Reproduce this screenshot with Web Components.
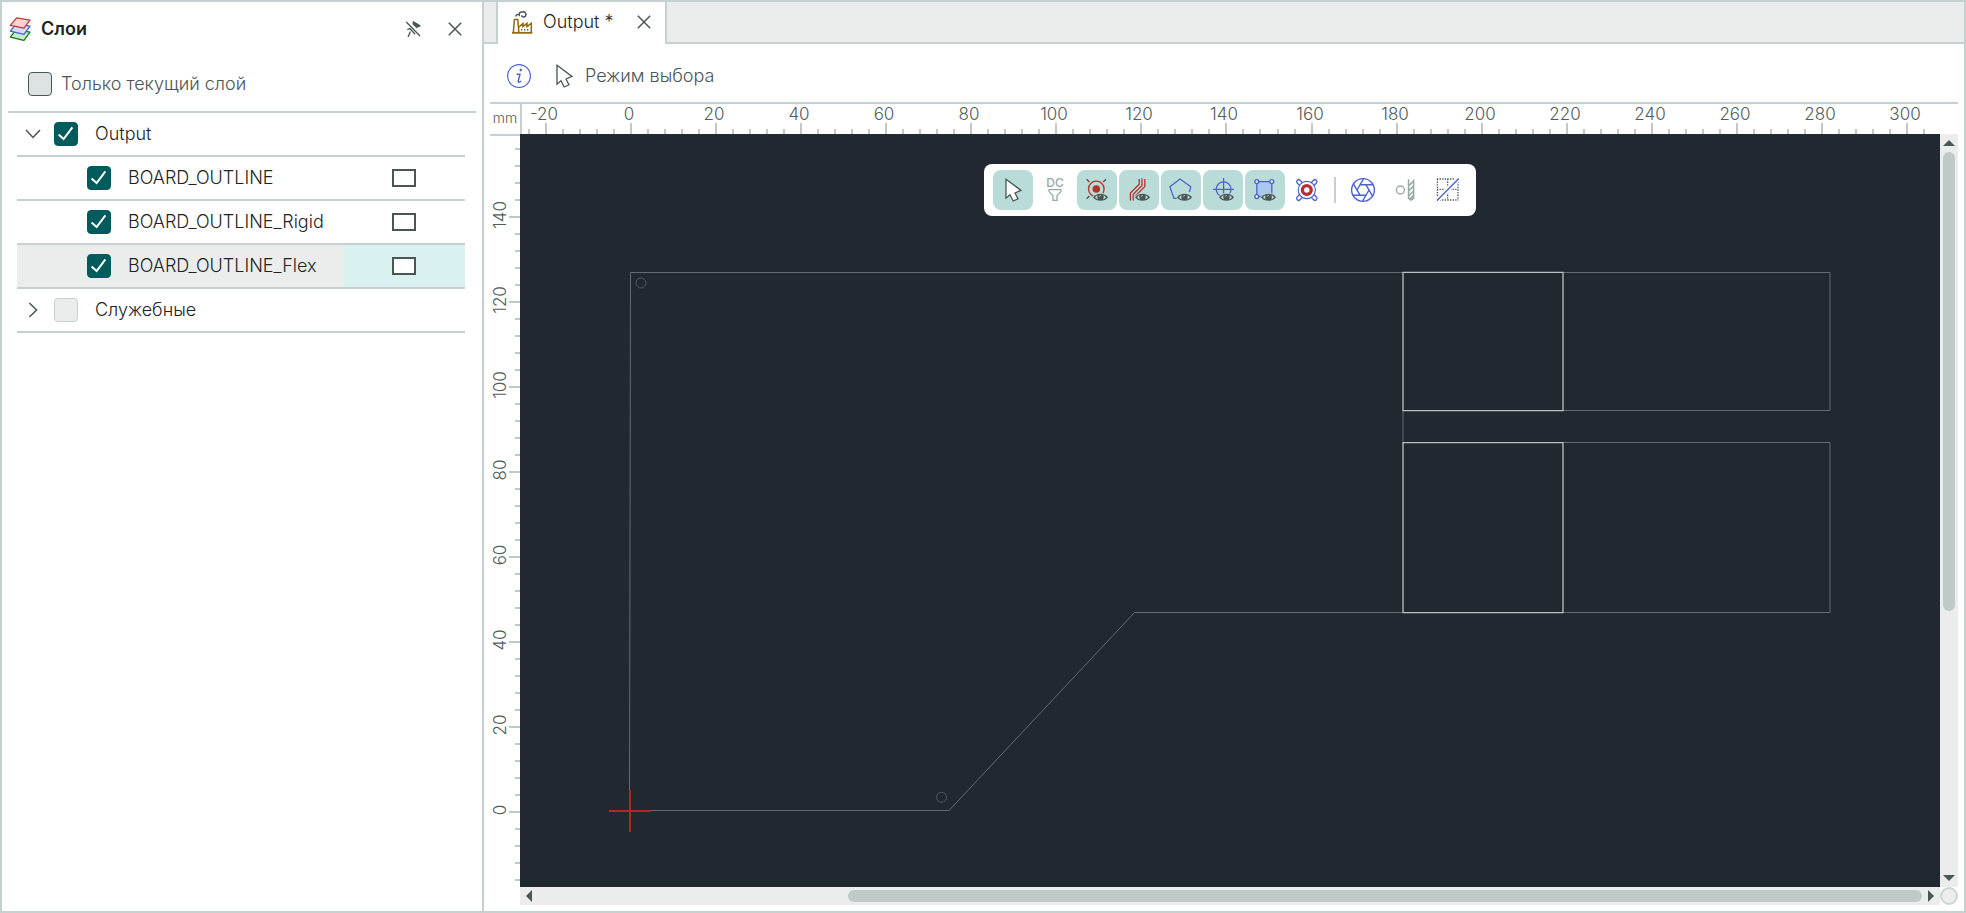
<!DOCTYPE html>
<html lang="ru">
<head>
<meta charset="utf-8">
<title>Output</title>
<style>
  :root {
    --line: #c5d1d0;
    --soft: #ebedec;
    --ink: #1f2423;
    --muted: #4a5654;
    --teal: #005c5c;
    --tint: #badcd9;
    --canvas: #222830;
    --thumb: #bec9c8;
  }
  html, body { height: 100%; }
  body {
    margin: 0;
    font: 300 18px/24px Inter, "Noto Sans", sans-serif;
    color: var(--ink);
    background: #fff;
  }
</style>
</head>
<body>
<cam-app></cam-app>

<script>
const EYE = `<g><path d="M8 19.3C11 14.5 20 14.5 23 19.3C20 24 11 24 8 19.3Z" fill="#4a5654" stroke="#badcd9" stroke-width="1.6" paint-order="stroke"/>
  <path d="M10 19.3Q11 17.5 12.6 17.2Q11.6 19.4 12.8 21.4Q11 20.8 10 19.3ZM21 19.3Q20 17.5 18.4 17.2Q19.4 19.4 18.2 21.4Q20 20.8 21 19.3Z" fill="#badcd9"/>
  <path d="M14.2 18.6Q14.6 17.4 15.8 17.4" fill="none" stroke="#badcd9" stroke-width="1"/></g>`;
const BLADES = [0, 60, 120, 180, 240, 300]
  .map(a => `<path d="M18 12L11.4 23.4" transform="rotate(${a} 12 12)"/>`).join("");

const ICONS = {
  layers: `<g stroke-width="1.3" stroke-linejoin="round">
    <path d="M8.3 12.7L22 15.2L16 23.3L2.3 20.2Z" fill="#c9ecce" stroke="#0b7d14"/>
    <path d="M8.3 6.7L22 9.2L16 17.3L2.3 14.2Z" fill="#d3dcfb" stroke="#4a62d0"/>
    <path d="M8.7 .8L22 3.2L16 11.2L2.3 8.3Z" fill="#fbd3d3" stroke="#c23b38"/></g>`,
  unpin: `<g stroke="#4a5654" stroke-width="1.3" fill="none"><path d="M5.3 5L19 19"/>
    <path d="M12.2 4.5L19.4 8.8L18 9.6L15.4 10.6L12 7.2Z" fill="#4a5654" stroke-width="1"/>
    <path d="M6.3 12.6L9 11.6L14 17.2M9.4 14.6L7 20"/></g>`,
  close: `<path d="M5.8 5.8L18.2 18.2M18.2 5.8L5.8 18.2" stroke="#4a5654" stroke-width="1.5"/>`,
  down: `<path d="M5 8L12 15.4L19 8" fill="none" stroke="#4a5654" stroke-width="1.5"/>`,
  right: `<path d="M8.4 5L15.6 12L8.4 19" fill="none" stroke="#4a5654" stroke-width="1.5"/>`,
  factory: `<g fill="none" stroke="#93690c" stroke-width="1.5"><path d="M2 22.8H22.4" stroke-width="1.8"/>
    <path d="M3.4 22L4.4 9.4H7.8L8.8 22M9 17L13 13.4V16.6L17 13.4V16.6L21.3 13.2V22"/>
    <path d="M11 19.8H12.3M14 19.8H15.3M17 19.8H18.3" stroke="#4a5654"/>
    <path d="M5.8 6.6C5.8 4.6 8 4 9.2 5C9 2.6 10.8 1.6 12.4 2C15 1.2 16.8 3.8 15.6 5.8C14.6 7.6 11.8 7.2 11.6 5.2" stroke="#4a5654"/></g>`,
  info: `<g fill="none" stroke="#4a62d0"><circle cx="12" cy="12" r="11.4" stroke-width="1.2"/>
    <circle cx="13.8" cy="6" r=".9" fill="#4a62d0"/><path d="M9.6 10.2H13L11.2 17Q11 18.6 12.4 18.2L14.2 17.2" stroke-width="1.4"/></g>`,
  cursor: `<path d="M5 1.2V20.2L9 16.8L12.2 23L17 20.8L14 15L20 12.4Z" fill="#fff" stroke="#4a5654" stroke-width="1.3"/>`,
  dc: `<text x="12" y="9" text-anchor="middle" font-family="Inter, sans-serif" font-size="12" font-weight="500" fill="#9aa8a6">DC</text>
    <path d="M6 11.6H18V13.6L14 17.6V22.4H10V17.6L6 13.6Z" fill="none" stroke="#9aa8a6" stroke-width="1.3"/>`,
  target: `<g fill="none" stroke="#b8302c"><circle cx="11.3" cy="11" r="7.8" stroke-width="1.3"/><circle cx="11.3" cy="11" r="3.8" fill="#b8302c" stroke="none"/></g>
    <path d="M1.6 1.2L4.4 4M21 1.2L18.2 4M1.6 20.8L4.4 18" stroke="#4a5654" stroke-width="1.3"/>${EYE}`,
  traces: `<g fill="none" stroke="#b8302c" stroke-width="1.3"><path d="M3.4 22.6V15L12.2 6.2V1"/><path d="M6.2 22.6V16.2L15 7.4V.2"/><path d="M9 20V17.2L17.8 8.6V1"/></g>${EYE}`,
  polygon: `<path d="M20.4 14L21.8 8.8L11 1L.9 8.8L5 20.4H9" fill="none" stroke="#4a62d0" stroke-width="1.3"/>${EYE}`,
  crosshair: `<g fill="none" stroke="#4a62d0" stroke-width="1.3"><circle cx="12.6" cy="11.3" r="7.4"/><path d="M2 11.3H23M12.6 0V22"/></g>${EYE}`,
  region: `<g stroke="#4a62d0" stroke-width="1.3"><rect x="3.8" y="3.6" width="15" height="15" fill="#a9c8ec"/>
    <g fill="#e4eefa"><circle cx="3.8" cy="3.6" r="2"/><circle cx="18.8" cy="3.6" r="2"/><circle cx="3.8" cy="18.6" r="2"/></g></g>${EYE}`,
  pad: `<g stroke-linecap="round"><path d="M3.6 3.6L20 20.4M20 3.6L3.6 20.4" stroke="#4a62d0" stroke-width="5.2"/>
    <path d="M3.6 3.6L20 20.4M20 3.6L3.6 20.4" stroke="#fff" stroke-width="2.6"/></g>
    <circle cx="11.8" cy="12" r="8.6" fill="#fff" stroke="#4a62d0" stroke-width="1.2"/>
    <circle cx="11.8" cy="12" r="4.4" fill="#fff" stroke="#b8302c" stroke-width="3.4"/>`,
  iris: `<g fill="none" stroke="#4a62d0" stroke-width="1.4"><circle cx="12" cy="12" r="11.4"/>${BLADES}</g>`,
  drill: `<g fill="none" stroke="#9aa8a6" stroke-width="1.4"><circle cx="7.4" cy="12" r="4"/>
    <path d="M15.6 1.4V20.4L18 22L20.6 20.4V1.4M15.6 8L20.6 3M15.6 13L20.6 8M15.6 18L20.6 13M16.6 21.4L20.6 17.4" stroke-width="1.6"/></g>`,
  grid: `<path d="M2 1H23.4M2 11.4H23.4M2 22H23.4M2.4 1V22M12.6 1V22M23 1V22" fill="none" stroke="#4a5654" stroke-width="1.3" stroke-dasharray="1.3 1.3"/>
    <path d="M2.4 22L23 1" stroke="#fff" stroke-width="5"/><path d="M2 22.4L23.6 .8" stroke="#4a62d0" stroke-width="1.4"/>`,
};

function define(name, html, setup) {
  const template = document.createElement("template");
  template.innerHTML = html;
  customElements.define(name, class extends HTMLElement {
    connectedCallback() {
      if (this.shadowRoot) return;
      this.attachShadow({ mode: "open" }).append(template.content.cloneNode(true));
      if (setup) setup(this, this.shadowRoot);
    }
  });
}

define("cam-icon", `<style>:host{display:block;flex:none;width:24px;height:24px}svg{display:block;overflow:visible}</style>`,
  (host, root) => {
    root.innerHTML += `<svg width="24" height="24" viewBox="0 0 24 24" aria-hidden="true">${ICONS[host.getAttribute("name")]}</svg>`;
  });

define("icon-button", `
<style>
  :host { display: block; flex: none; }
  button { display: grid; place-items: center; width: 24px; height: 24px; padding: 0; border: 0; background: none; }
</style>
<button type="button"><slot></slot></button>`,
  (host, root) => root.querySelector("button").setAttribute("aria-label", host.getAttribute("label")));

/* Tick box with its caption */
define("check-field", `
<style>
  :host { display: block; min-width: 0; }
  label { display: flex; align-items: center; gap: var(--gap, 17px); white-space: nowrap; }
  input {
    appearance: none; flex: none; box-sizing: border-box; width: 24px; height: 24px; margin: 0;
    border: 1px solid var(--muted); border-radius: 4px; background: #dde3e2;
  }
  input:checked {
    border-color: var(--teal);
    background: var(--teal) url("data:image/svg+xml,%3Csvg xmlns='http://www.w3.org/2000/svg' viewBox='0 0 22 22'%3E%3Cpath d='M3.6 11.4L8.6 16L17.4 4.4' fill='none' stroke='white' stroke-width='2'/%3E%3C/svg%3E") center / 22px no-repeat;
  }
  input:disabled { border-color: var(--line); background: var(--soft); }
</style>
<label><input type="checkbox"><slot></slot></label>`,
  (host, root) => {
    const input = root.querySelector("input");
    input.checked = host.hasAttribute("checked");
    input.disabled = host.hasAttribute("disabled");
  });

/* Row of the layer tree */
define("layer-row", `
<style>
  :host { display: flex; height: 42px; border-bottom: 2px solid var(--line); }
  .name { flex: 1; display: flex; align-items: center; gap: 9px; min-width: 0; padding-left: 4px; }
  :host([child]) .name { padding-left: 70px; }
  .swatch { display: none; width: 121px; align-items: center; padding-left: 48px; box-sizing: border-box; }
  :host([child]) .swatch { display: flex; }
  :host([selected]) .name { background: var(--soft); }
  :host([selected]) .swatch { background: #d9f2f1; }
  .swatch button { width: 24px; height: 18px; padding: 0; border: 2px solid var(--muted); background: #fff; }
</style>
<div class="name"><slot name="toggle"></slot><slot></slot></div>
<div class="swatch"><button type="button" aria-label="Цвет слоя"></button></div>`);

define("layers-panel", `
<style>
  :host { display: flex; flex-direction: column; width: 480px; flex: none; border-right: 2px solid var(--line); background: #fff; }
  header { display: flex; align-items: center; gap: 9px; height: 54px; padding: 0 15px 0 6px; }
  h2 { flex: 1; margin: 0; font-size: 18px; font-weight: 600; }
  .tools { display: flex; gap: 18px; }
  .filter { margin: 0 6px; padding: 0 20px; height: 55px; display: flex; align-items: center; border-bottom: 2px solid var(--line); color: var(--muted); }
  .filter check-field { --gap: 9px; }
  .tree { margin: 0 17px 0 15px; }
</style>
<header>
  <cam-icon name="layers"></cam-icon>
  <h2>Слои</h2>
  <div class="tools">
    <icon-button label="Открепить"><cam-icon name="unpin"></cam-icon></icon-button>
    <icon-button label="Закрыть"><cam-icon name="close"></cam-icon></icon-button>
  </div>
</header>
<div class="filter"><check-field>Только текущий слой</check-field></div>
<div class="tree">
  <layer-row><icon-button slot="toggle" label="Свернуть"><cam-icon name="down"></cam-icon></icon-button><check-field checked>Output</check-field></layer-row>
  <layer-row child><check-field checked>BOARD_OUTLINE</check-field></layer-row>
  <layer-row child><check-field checked>BOARD_OUTLINE_Rigid</check-field></layer-row>
  <layer-row child selected><check-field checked>BOARD_OUTLINE_Flex</check-field></layer-row>
  <layer-row><icon-button slot="toggle" label="Развернуть"><cam-icon name="right"></cam-icon></icon-button><check-field disabled>Служебные</check-field></layer-row>
</div>`);

define("tab-strip", `
<style>
  :host { display: flex; height: 42px; }
  .edge, .rest { box-sizing: border-box; background: var(--soft); border-bottom: 2px solid var(--line); }
  .edge { width: 12px; }
  .rest { flex: 1; }
  .tab { display: flex; align-items: center; padding: 0 9px 2px 12px; border: solid var(--line); border-width: 0 2px; background: #fff; }
  .name { display: flex; align-items: center; gap: 9px; padding: 0; border: 0; background: none; font: inherit; color: inherit; }
  icon-button { margin-left: 18px; }
</style>
<div class="edge"></div>
<div class="tab">
  <button class="name" type="button"><cam-icon name="factory"></cam-icon>Output *</button>
  <icon-button label="Закрыть вкладку"><cam-icon name="close"></cam-icon></icon-button>
</div>
<div class="rest"></div>`);

define("mode-bar", `
<style>
  :host { display: flex; align-items: center; gap: 21px; height: 58px; padding: 6px 23px 0; color: var(--muted); box-sizing: border-box; }
  .mode { display: flex; align-items: center; gap: 9px; }
</style>
<icon-button label="Информация"><cam-icon name="info"></cam-icon></icon-button>
<div class="mode"><cam-icon name="cursor"></cam-icon><span>Режим выбора</span></div>`);

/* Ruler: a labelled tick each 20 mm, a small one each 4 mm, 17px apart */
const STEP = 17;
define("scale-ruler", `
<style>
  :host { display: block; position: relative; min-width: 0; min-height: 0; overflow: hidden; }
  svg { position: absolute; inset: 0; width: 100%; height: 100%; }
  rect { fill: var(--thumb); }
  text { fill: #535c5a; font: inherit; font-size: 17px; text-anchor: middle; }
</style><svg></svg>`,
  (host, root) => {
    const vertical = host.hasAttribute("vertical");
    const origin = +host.getAttribute("origin");
    const svg = root.querySelector("svg");
    const draw = () => {
      const length = vertical ? host.clientHeight : host.clientWidth - 18;
      const out = [];
      for (let i = -Math.floor(origin / STEP); origin + i * STEP < length - 1; i++) {
        const p = origin + i * STEP + (vertical ? 0 : Math.round(i / 75));
        if (p < 5) continue;
        const major = i % 5 === 0, size = major ? 11 : 5;
        out.push(vertical
          ? `<rect x="${30 - size}" y="${p - 1}" width="${size}" height="2"/>`
          : `<rect x="${p - 1}" y="${30 - size}" width="2" height="${size}"/>`);
        if (!major) continue;
        out.push(vertical
          ? `<text transform="translate(16 ${p - 2}) rotate(-90)">${-i * 4}</text>`
          : `<text x="${p - 2}" y="16">${i * 4}</text>`);
      }
      svg.innerHTML = out.join("");
    };
    draw();
    new ResizeObserver(draw).observe(host);
  });

define("scroll-strip", `
<style>
  :host { display: flex; background: var(--soft); }
  :host([vertical]) { flex-direction: column; }
  button { flex: none; display: grid; place-items: center; width: 18px; height: 18px; padding: 0; border: 0; background: none; }
  svg { display: block; fill: var(--muted); }
  .track { flex: 1; display: flex; flex-direction: inherit; min-width: 0; min-height: 0; }
  .thumb { border-radius: 6px; background: var(--thumb); margin: 3px 0; }
  :host([vertical]) .thumb { margin: 0 3px; }
</style>
<button type="button" aria-label="Назад"><svg width="12" height="12"></svg></button>
<div class="track"><div class="before"></div><div class="thumb"></div><div class="after"></div></div>
<button type="button" aria-label="Вперёд"><svg width="12" height="12"></svg></button>`,
  (host, root) => {
    const shapes = host.hasAttribute("vertical")
      ? ["M0 9L6 3L12 9Z", "M0 3L6 9L12 3Z"] : ["M9 0L3 6L9 12Z", "M3 0L9 6L3 12Z"];
    root.querySelectorAll("svg").forEach((svg, i) => svg.innerHTML = `<path d="${shapes[i]}"/>`);
    const parts = host.getAttribute("parts").split(" ");
    [...root.querySelector(".track").children].forEach((el, i) => el.style.flex = `${parts[i]} 1 0`);
  });

define("tool-toggle", `
<style>
  :host { display: block; }
  button { display: grid; place-items: center; width: 40px; height: 40px; padding: 0; border: 0; border-radius: 8px; background: none; }
  :host([on]) button { background: var(--tint); }
</style>
<button type="button"></button>`,
  (host, root) => {
    const button = root.querySelector("button");
    button.innerHTML = `<cam-icon name="${host.getAttribute("icon")}"></cam-icon>`;
    button.setAttribute("aria-label", host.getAttribute("label"));
    button.setAttribute("aria-pressed", host.hasAttribute("on"));
  });

define("tool-palette", `
<style>
  :host { display: flex; align-items: center; gap: 2px; padding: 6px 9px; border-radius: 8px; background: #fff; }
  hr { width: 2px; height: 26px; margin: 0 5px; border: 0; background: var(--line); }
</style>
<tool-toggle on icon="cursor" label="Выбор"></tool-toggle>
<tool-toggle icon="dc" label="Фильтр D-кодов"></tool-toggle>
<tool-toggle on icon="target" label="Вспышки"></tool-toggle>
<tool-toggle on icon="traces" label="Трассы"></tool-toggle>
<tool-toggle on icon="polygon" label="Полигоны"></tool-toggle>
<tool-toggle on icon="crosshair" label="Отверстия"></tool-toggle>
<tool-toggle on icon="region" label="Области"></tool-toggle>
<tool-toggle icon="pad" label="Площадки"></tool-toggle>
<hr>
<tool-toggle icon="iris" label="Апертуры"></tool-toggle>
<tool-toggle icon="drill" label="Свёрла"></tool-toggle>
<tool-toggle icon="grid" label="Сетка"></tool-toggle>`);

define("board-canvas", `
<style>
  :host { display: block; position: relative; overflow: hidden; min-width: 0; min-height: 0; background: var(--canvas); }
  svg { position: absolute; inset: 0; width: 100%; height: 100%; fill: none; }
  .bar { position: relative; display: flex; justify-content: center; padding-top: 30px; }
  .rigid { stroke: #666a70; }
  .hole { stroke: #505860; }
  .flex { stroke: #bcc0c2; }
  .origin { stroke: #a82a2a; stroke-width: 2; }
</style>
<svg role="img" aria-label="Контур платы">
  <path class="rigid" d="M109.5 676.5L110.5 138.5H1310V276.5H883V308.5H1310V478.5H614.5L429 676.5Z"/>
  <circle class="hole" cx="121" cy="149" r="5"/><circle class="hole" cx="421.6" cy="663.3" r="5"/>
  <path class="flex" stroke-width="1.3" d="M883 138.4H1043V276.6H883ZM883 308.6H1043V478.6H883Z"/>
  <path class="origin" d="M89 677H131M110 656V698"/>
</svg>
<div class="bar"><tool-palette></tool-palette></div>`);

define("board-view", `
<style>
  :host { flex: 1; min-height: 0; display: grid; grid-template-columns: 30px 1fr 18px; grid-template-rows: 30px 1fr 18px; margin: 0 6px 6px; border-top: 2px solid var(--line); }
  .unit { font-size: 14px; line-height: 28px; text-align: center; color: #535c5a; }
  .top { grid-column: 2 / 4; border-left: 2px solid var(--line); }
  .left { border-top: 2px solid var(--line); }
  .bottom { grid-column: 2; }
  .knob { box-sizing: border-box; border: 2px solid #c9d5d3; border-radius: 50%; background: var(--soft); }
</style>
<div class="unit">mm</div>
<scale-ruler class="top" origin="109"></scale-ruler>
<scale-ruler class="left" vertical origin="676"></scale-ruler>
<board-canvas></board-canvas>
<scroll-strip vertical parts="0 459 258"></scroll-strip>
<scroll-strip class="bottom" parts="310 1075 0"></scroll-strip>
<div class="knob"></div>`);

define("cam-app", `
<style>
  :host { display: flex; box-sizing: border-box; height: 100vh; border: 2px solid var(--line); }
  main { flex: 1; min-width: 0; display: flex; flex-direction: column; }
</style>
<layers-panel></layers-panel>
<main>
  <tab-strip></tab-strip>
  <mode-bar></mode-bar>
  <board-view></board-view>
</main>`);
</script>
</body>
</html>
